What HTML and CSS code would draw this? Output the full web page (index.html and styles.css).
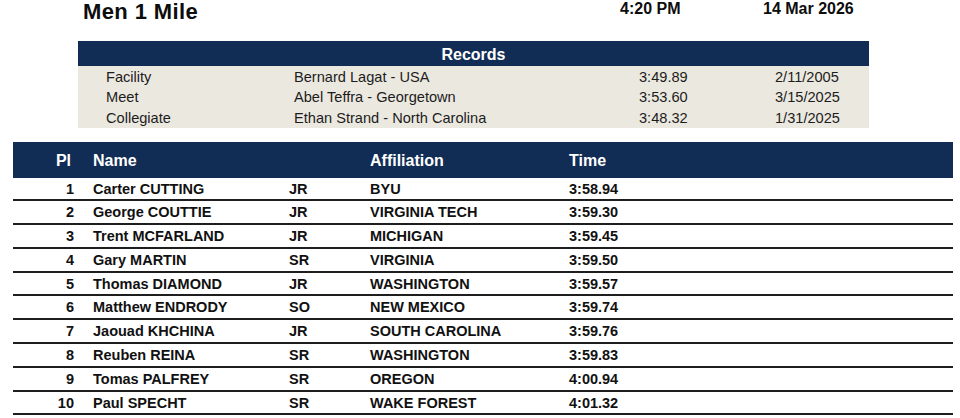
FILE: index.html
```html
<!DOCTYPE html>
<html lang="en">
<head>
<meta charset="utf-8">
<title>Men 1 Mile</title>
<link rel="stylesheet" href="styles.css">
</head>
<body>
<div class="page">
  <header class="top">
    <h1 class="title">Men 1 Mile</h1>
    <div class="clock">4:20 PM</div>
    <div class="date">14 Mar 2026</div>
  </header>

  <section class="records">
    <div class="records-head">Records</div>
    <div class="records-body">
      <div class="rec-row"><span>Facility</span><span>Bernard Lagat - USA</span><span>3:49.89</span><span>2/11/2005</span></div>
      <div class="rec-row"><span>Meet</span><span>Abel Teffra - Georgetown</span><span>3:53.60</span><span>3/15/2025</span></div>
      <div class="rec-row"><span>Collegiate</span><span>Ethan Strand - North Carolina</span><span>3:48.32</span><span>1/31/2025</span></div>
    </div>
  </section>

  <section class="results">
    <div class="res-head">
      <span class="pl pl-head">Pl</span><span>Name</span><span></span><span>Affiliation</span><span>Time</span>
    </div>
    <div class="res-row"><span class="pl">1</span><span>Carter CUTTING</span><span>JR</span><span>BYU</span><span>3:58.94</span></div>
    <div class="res-row"><span class="pl">2</span><span>George COUTTIE</span><span>JR</span><span>VIRGINIA TECH</span><span>3:59.30</span></div>
    <div class="res-row"><span class="pl">3</span><span>Trent MCFARLAND</span><span>JR</span><span>MICHIGAN</span><span>3:59.45</span></div>
    <div class="res-row"><span class="pl">4</span><span>Gary MARTIN</span><span>SR</span><span>VIRGINIA</span><span>3:59.50</span></div>
    <div class="res-row"><span class="pl">5</span><span>Thomas DIAMOND</span><span>JR</span><span>WASHINGTON</span><span>3:59.57</span></div>
    <div class="res-row"><span class="pl">6</span><span>Matthew ENDRODY</span><span>SO</span><span>NEW MEXICO</span><span>3:59.74</span></div>
    <div class="res-row"><span class="pl">7</span><span>Jaouad KHCHINA</span><span>JR</span><span>SOUTH CAROLINA</span><span>3:59.76</span></div>
    <div class="res-row"><span class="pl">8</span><span>Reuben REINA</span><span>SR</span><span>WASHINGTON</span><span>3:59.83</span></div>
    <div class="res-row"><span class="pl">9</span><span>Tomas PALFREY</span><span>SR</span><span>OREGON</span><span>4:00.94</span></div>
    <div class="res-row"><span class="pl">10</span><span>Paul SPECHT</span><span>SR</span><span>WAKE FOREST</span><span>4:01.32</span></div>
  </section>
</div>
</body>
</html>
```

FILE: styles.css
```css
* { box-sizing: border-box; }

html, body {
  margin: 0;
  padding: 0;
  background: #ffffff;
}

body {
  font-family: "Liberation Sans", Arial, sans-serif;
  color: #111111;
}

.page {
  width: 960px;
  height: 418px;
  overflow: hidden;
}

.top {
  display: grid;
  grid-template-columns: 537px 143px auto;
  height: 41px;
  padding-left: 83px;
  align-items: start;
}

.title {
  margin: 0;
  font-size: 22px;
  line-height: 24px;
  font-weight: bold;
  letter-spacing: 0.4px;
  color: #0d0d0d;
}

.clock,
.date {
  font-size: 16px;
  line-height: 16px;
  font-weight: bold;
  color: #0d0d0d;
  padding-top: 1px;
}

.records {
  margin-left: 78px;
  width: 791px;
}

.records-head {
  height: 25px;
  background: #122d55;
  color: #ffffff;
  font-size: 16px;
  line-height: 28px;
  font-weight: bold;
  text-align: center;
}

.records-body {
  background: #ebe8e0;
  padding-top: 0.5px;
}

.rec-row {
  display: grid;
  grid-template-columns: 188px 345px 136px auto;
  height: 20.5px;
  padding-left: 28px;
  font-size: 14.6px;
  line-height: 21px;
  color: #1c1c1c;
}

.results {
  margin-top: 13.5px;
  margin-left: 13px;
  width: 940px;
}

.res-head,
.res-row {
  display: grid;
  grid-template-columns: 80px 196px 81px 199px 1fr;
  font-weight: bold;
}

.res-head {
  height: 36px;
  background: #122d55;
  color: #ffffff;
  font-size: 16px;
  line-height: 37px;
}

.res-row {
  height: 23.8px;
  border-bottom: 2px solid #1e1e1e;
  padding-top: 1px;
  font-size: 14.5px;
  line-height: 21px;
  color: #111111;
}

.pl {
  text-align: right;
  padding-right: 19px;
}

.pl-head {
  padding-right: 22px;
}
```
